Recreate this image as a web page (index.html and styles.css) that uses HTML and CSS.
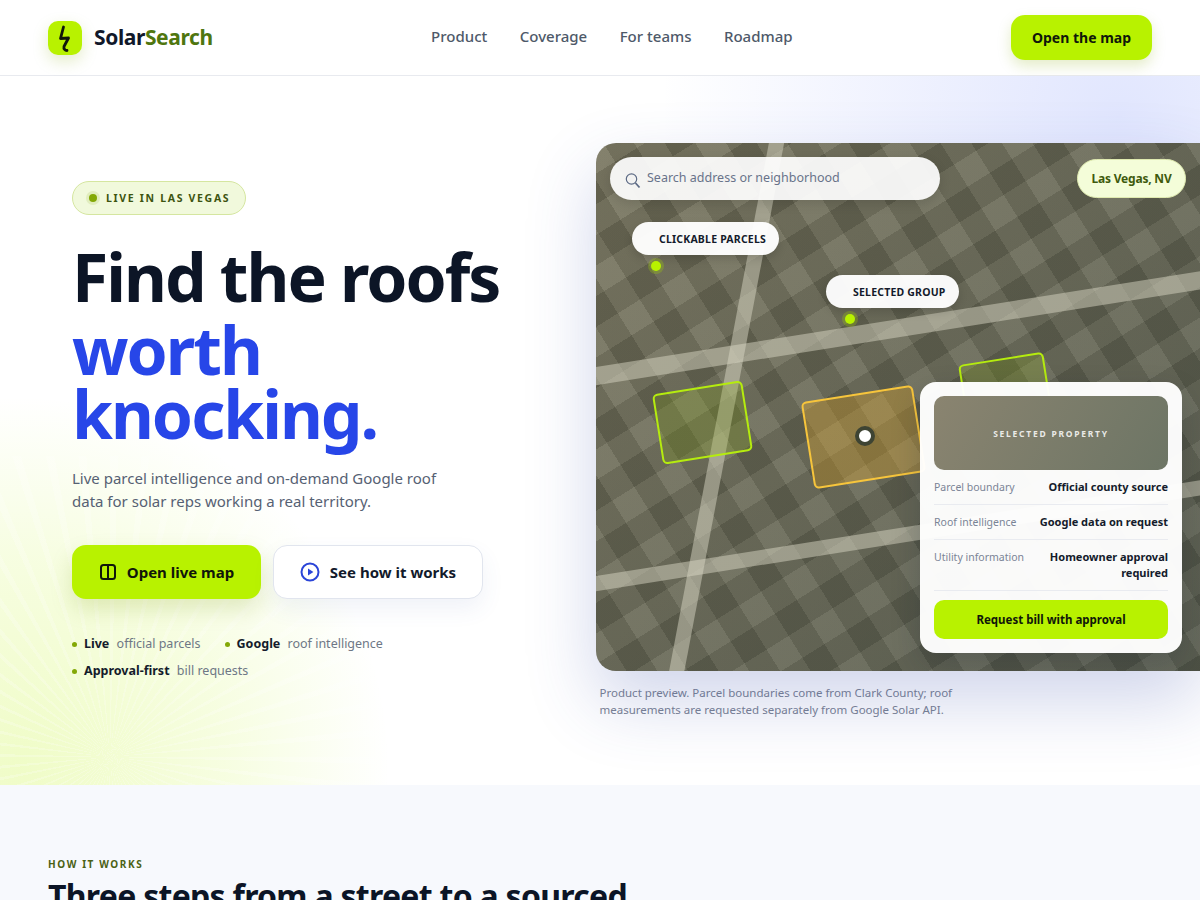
FILE: index.html
```html
<!DOCTYPE html>
<html lang="en">
<head>
    <meta charset="UTF-8">
    <meta name="viewport" content="width=device-width, initial-scale=1.0">
    <title>SolarSearch</title>
    <link rel="stylesheet" href="styles.css">
</head>
<body>
    <header class="topbar">
        <a class="brand" href="#">
            <span class="brand-mark">
                <svg width="20" height="28" viewBox="0 0 20 28" fill="none">
                    <path d="M8.5 3 L5.5 14.5 L13.5 14 L9 22.5 C8.5 25 10 26.5 12 26.5" stroke="#10170a" stroke-width="2.8" stroke-linecap="round" stroke-linejoin="round"/>
                </svg>
            </span>
            <span class="brand-name">Solar<em>Search</em></span>
        </a>
        <nav class="nav">
            <a href="#">Product</a>
            <a href="#">Coverage</a>
            <a href="#">For teams</a>
            <a href="#">Roadmap</a>
        </nav>
        <a class="btn-top" href="#">Open the map</a>
    </header>

    <section class="hero">
        <div class="hero-copy">
            <div class="badge"><span class="badge-dot"></span>LIVE IN LAS VEGAS</div>
            <h1>Find the roofs <span>worth knocking.</span></h1>
            <p class="lead">Live parcel intelligence and on-demand Google roof data for solar reps working a real territory.</p>
            <div class="actions">
                <a class="btn btn-lime" href="#">
                    <svg width="18" height="18" viewBox="0 0 18 18" fill="none" stroke="#10170a" stroke-width="2">
                        <rect x="2" y="2" width="14" height="14" rx="2.5"/>
                        <path d="M9 2v14"/>
                    </svg>
                    Open live map
                </a>
                <a class="btn btn-white" href="#">
                    <svg width="20" height="20" viewBox="0 0 20 20" fill="none">
                        <circle cx="10" cy="10" r="8.5" stroke="#2b45d8" stroke-width="2"/>
                        <path d="M8 6.6 L13.4 10 L8 13.4 Z" fill="#2b45d8"/>
                    </svg>
                    See how it works
                </a>
            </div>
            <ul class="proof">
                <li><b>Live</b> official parcels</li>
                <li><b>Google</b> roof intelligence</li>
                <li><b>Approval-first</b> bill requests</li>
            </ul>
        </div>

        <div class="preview">
            <div class="map">
                <div class="road road-a"></div>
                <div class="road road-b"></div>
                <div class="road road-c"></div>
                <div class="parcel parcel-a"></div>
                <div class="parcel parcel-b"></div>
                <div class="parcel parcel-c"></div>
                <div class="marker"></div>

                <div class="search">
                    <svg width="16" height="17" viewBox="0 0 16 17" fill="none" stroke="#5d6b85" stroke-width="1.2">
                        <circle cx="6.5" cy="7" r="5.2"/>
                        <path d="M10.5 11 L14.5 15.5" stroke-width="1.8"/>
                    </svg>
                    <span>Search address or neighborhood</span>
                </div>
                <div class="city">Las Vegas, NV</div>

                <div class="chip chip-a">CLICKABLE PARCELS</div>
                <div class="chip chip-b">SELECTED GROUP</div>

                <aside class="card">
                    <div class="thumb">SELECTED PROPERTY</div>
                    <div class="row"><span>Parcel boundary</span><b>Official county source</b></div>
                    <div class="row"><span>Roof intelligence</span><b>Google data on request</b></div>
                    <div class="row"><span>Utility information</span><b>Homeowner approval required</b></div>
                    <a class="btn-card" href="#">Request bill with approval</a>
                </aside>
            </div>
            <p class="caption">Product preview. Parcel boundaries come from Clark County; roof measurements are requested separately from Google Solar API.</p>
        </div>
    </section>

    <section class="steps">
        <div class="eyebrow">HOW IT WORKS</div>
        <h2>Three steps from a street to a sourced</h2>
    </section>
</body>
</html>
```

FILE: styles.css
```css
* {
    box-sizing: border-box;
}
body {
    font-family: "Noto Sans", sans-serif;
    background-color: #fff;
    color: #0f172a;
    margin: 0;
    overflow-x: hidden;
}
a {
    text-decoration: none;
    color: inherit;
}

/* top bar */
.topbar {
    height: 76px;
    display: flex;
    align-items: center;
    justify-content: space-between;
    padding: 0 48px;
    background-color: #fff;
    border-bottom: 1px solid #e8eaef;
}
.brand {
    display: flex;
    align-items: center;
    gap: 12px;
}
.brand-mark {
    width: 34px;
    height: 34px;
    border-radius: 10px;
    background-color: #b8f200;
    display: flex;
    align-items: center;
    justify-content: center;
    box-shadow: 0 6px 16px rgba(130, 170, 0, 0.22);
}
.brand-name {
    font-size: 21px;
    font-weight: 700;
    letter-spacing: -0.4px;
    color: #11182a;
    margin-bottom: 2px;
}
.brand-name em {
    font-style: normal;
    color: #4f760f;
}
.nav {
    display: flex;
    gap: 32.5px;
    font-size: 15px;
    font-weight: 500;
    color: #4e5969;
    margin-bottom: 4px;
}
.btn-top {
    background-color: #b8f200;
    color: #10170a;
    font-size: 14px;
    font-weight: 700;
    height: 45px;
    width: 141px;
    display: flex;
    align-items: center;
    justify-content: center;
    border-radius: 14px;
    box-shadow: 0 6px 14px rgba(130, 170, 0, 0.22);
}

/* hero */
.hero {
    position: relative;
    display: grid;
    grid-template-columns: 524px 1fr;
    align-items: center;
    padding: 67px 0 67px 72px;
    overflow: hidden;
    background-color: #fff;
    background-image:
        radial-gradient(circle 370px at 20px 690px, rgba(184, 242, 0, 0.22), rgba(184, 242, 0, 0.12) 55%, rgba(184, 242, 0, 0) 100%),
        radial-gradient(circle 460px at 1120px 40px, rgba(105, 130, 250, 0.2), rgba(105, 130, 250, 0) 100%);
}
/* faint rays over the lime glow */
.hero::before {
    content: "";
    position: absolute;
    left: 0;
    top: 380px;
    width: 400px;
    height: 329px;
    background-image: repeating-conic-gradient(from 0deg at 110px 301px, rgba(255, 255, 255, 0.22) 0deg 1.5deg, rgba(255, 255, 255, 0) 1.5deg 6deg);
}
.hero-copy,
.preview {
    position: relative;
    min-width: 0;
}
.badge {
    display: inline-flex;
    align-items: center;
    gap: 9px;
    height: 34px;
    padding: 0 15px 0 16px;
    border: 1px solid #d5e6a0;
    border-radius: 17px;
    background-color: #f1f9dc;
    color: #3d5410;
    font-size: 10.5px;
    font-weight: 700;
    letter-spacing: 1.68px;
}
.badge-dot {
    width: 8px;
    height: 8px;
    border-radius: 50%;
    background-color: #83a806;
    box-shadow: 0 0 0 3px rgba(131, 168, 6, 0.14);
}
h1 {
    width: 440px;
    margin: 29px 0 0;
    font-size: 66px;
    line-height: 64.7px;
    font-weight: 700;
    letter-spacing: -1.98px;
    color: #0c1526;
}
h1 span {
    display: block;
    margin-top: 8px;
    color: #2746e8;
}
.lead {
    margin: 21px 0 0;
    width: 375px;
    font-size: 15px;
    line-height: 23px;
    color: #566173;
}
.actions {
    display: flex;
    gap: 12px;
    margin-top: 32px;
}
.btn {
    height: 54px;
    display: flex;
    align-items: center;
    justify-content: center;
    gap: 10px;
    border-radius: 14px;
    font-size: 15px;
    font-weight: 700;
}
.btn-lime {
    width: 189px;
    background-color: #b8f200;
    color: #10170a;
    box-shadow: 0 10px 22px rgba(120, 150, 0, 0.2);
}
.btn-white {
    width: 210px;
    background-color: #fff;
    color: #121a2b;
    border: 1px solid #e1e5ee;
    box-shadow: 0 10px 22px rgba(70, 90, 170, 0.08);
}
.proof {
    list-style: none;
    display: flex;
    flex-wrap: wrap;
    gap: 9px 24px;
    width: 340px;
    margin: 36px 0 0;
    padding: 0;
    font-size: 12.5px;
    line-height: 18px;
    color: #6e7785;
}
.proof li {
    display: flex;
    align-items: center;
    white-space: pre;
}
.proof li::before {
    content: "";
    width: 5px;
    height: 5px;
    border-radius: 50%;
    background-color: #83a806;
    margin-right: 7px;
}
.proof b {
    color: #141b2b;
    font-weight: 700;
    margin-right: 4px;
}

/* map preview */
.map {
    position: relative;
    height: 528px;
    border-radius: 20px 0 0 20px;
    overflow: hidden;
    background-color: #73715b;
    background-image:
        linear-gradient(135deg, rgba(150, 140, 110, 0.1), rgba(40, 55, 55, 0.32)),
        repeating-linear-gradient(58deg, rgba(255, 255, 255, 0.055) 0 26px, rgba(0, 0, 0, 0.1) 26px 52px),
        repeating-linear-gradient(148deg, rgba(255, 255, 255, 0.055) 0 26px, rgba(0, 0, 0, 0.1) 26px 52px);
    box-shadow: 0 30px 70px rgba(60, 80, 170, 0.24);
}
.road {
    position: absolute;
    background-color: rgba(220, 218, 198, 0.48);
}
.road-a {
    left: -40px;
    top: 175px;
    width: 700px;
    height: 18px;
    transform: rotate(-9deg);
}
.road-b {
    left: -40px;
    top: 384px;
    width: 700px;
    height: 15px;
    transform: rotate(-9deg);
}
.road-c {
    left: 122px;
    top: -30px;
    width: 15px;
    height: 600px;
    transform: rotate(10.7deg);
}
.parcel {
    position: absolute;
    border: 2px solid #b5ec0e;
    border-radius: 5px;
    background-color: rgba(140, 170, 20, 0.24);
    transform: rotate(-9deg);
}
.parcel-a {
    left: 61px;
    top: 244px;
    width: 91px;
    height: 71px;
}
.parcel-b {
    left: 211px;
    top: 250px;
    width: 113px;
    height: 88px;
    border-color: #f7c53c;
    background-color: rgba(235, 175, 40, 0.32);
}
.parcel-c {
    left: 367px;
    top: 215px;
    width: 86px;
    height: 70px;
}
.marker {
    position: absolute;
    left: 259px;
    top: 283px;
    width: 20px;
    height: 20px;
    border-radius: 50%;
    background-color: #fff;
    border: 4px solid #3e4433;
}
.search {
    position: absolute;
    left: 14px;
    top: 14px;
    width: 330px;
    height: 43px;
    display: flex;
    align-items: center;
    gap: 6px;
    padding: 0 15px;
    border-radius: 22px;
    background-color: rgba(255, 255, 255, 0.92);
    font-size: 12.5px;
    color: #69738a;
    box-shadow: 0 4px 12px rgba(0, 0, 0, 0.12);
}
.search svg {
    margin-top: 4px;
}
.search span {
    margin-top: -3px;
}
.city {
    position: absolute;
    right: 14px;
    top: 16px;
    height: 39px;
    width: 109px;
    display: flex;
    align-items: center;
    justify-content: center;
    border: 1px solid #dfeab0;
    border-radius: 20px;
    background-color: #f4fdd9;
    color: #3e5a0d;
    font-size: 12px;
    font-weight: 700;
    letter-spacing: -0.2px;
}
.chip {
    position: absolute;
    height: 33px;
    display: flex;
    align-items: center;
    padding: 0 13px 0 27px;
    border-radius: 17px;
    background-color: rgba(255, 255, 255, 0.96);
    color: #141b2b;
    font-size: 10.5px;
    font-weight: 700;
    letter-spacing: 0.2px;
    box-shadow: 0 4px 10px rgba(0, 0, 0, 0.14);
}
.chip::after {
    content: "";
    position: absolute;
    left: 19px;
    top: 39px;
    width: 10px;
    height: 10px;
    border-radius: 50%;
    background-color: #b8f200;
    box-shadow: 0 0 0 3px rgba(165, 215, 0, 0.28);
}
.chip-a {
    left: 36px;
    top: 79px;
}
.chip-b {
    left: 230px;
    top: 132px;
}
.card {
    position: absolute;
    left: 324px;
    top: 239px;
    width: 262px;
    height: 271px;
    padding: 14px;
    border-radius: 16px;
    background-color: rgba(255, 255, 255, 0.97);
    box-shadow: 0 12px 30px rgba(20, 30, 50, 0.2);
}
.thumb {
    height: 74px;
    display: flex;
    align-items: center;
    justify-content: center;
    border-radius: 10px;
    background-image: linear-gradient(120deg, #8a8470, #6d7565);
    color: rgba(255, 255, 255, 0.85);
    font-size: 8.5px;
    font-weight: 700;
    letter-spacing: 1.75px;
}
.row {
    display: flex;
    justify-content: space-between;
    gap: 16px;
    padding: 9px 0;
    border-bottom: 1px solid #e9ebf0;
    font-size: 10.5px;
    line-height: 16px;
    color: #7a8496;
}
.row span {
    white-space: nowrap;
}
.row b {
    color: #141b2b;
    font-size: 11px;
    font-weight: 700;
    text-align: right;
}
.btn-card {
    display: flex;
    align-items: center;
    justify-content: center;
    height: 39px;
    margin-top: 9px;
    border-radius: 10px;
    background-color: #b8f200;
    color: #10170a;
    font-size: 11.5px;
    font-weight: 700;
}
.caption {
    margin: 12.5px 0 0 3.5px;
    width: 370px;
    font-size: 11.5px;
    line-height: 17.25px;
    color: #7a8292;
}

/* how it works */
.steps {
    height: 200px;
    padding: 72px 48px 0;
    background-color: #f7f9fd;
}
.eyebrow {
    font-size: 10px;
    line-height: 14px;
    font-weight: 700;
    letter-spacing: 1.6px;
    color: #4a6114;
}
h2 {
    margin: 7px 0 0;
    font-size: 32px;
    line-height: 36px;
    font-weight: 700;
    letter-spacing: -0.72px;
    color: #0c1526;
}
```
